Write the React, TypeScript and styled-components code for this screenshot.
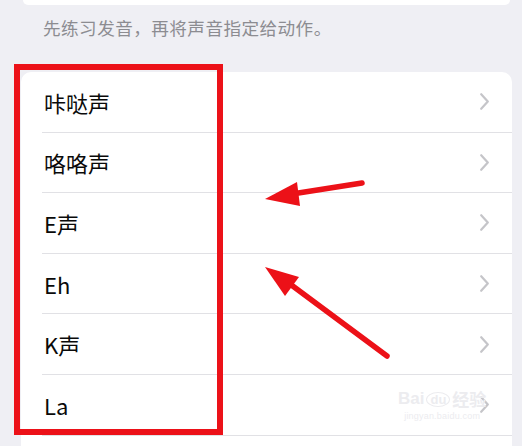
import React from "react";
import styled, { createGlobalStyle } from "styled-components";

const GlobalStyle = createGlobalStyle`
  html, body {
    margin: 0;
    padding: 0;
    background: #efeff4;
  }
  body {
    font-family: "Noto Sans CJK SC", "Noto Sans", "Liberation Sans", sans-serif;
  }
`;

const Page = styled.div`
  position: relative;
  width: 522px;
  height: 446px;
  overflow: hidden;
  background: #efeff4;
`;

const TopCard = styled.div`
  margin: 0 12px 0 23px;
  height: 5px;
  background: #ffffff;
  border-radius: 0 0 10px 10px;
`;

const Caption = styled.div`
  padding: 11px 0 0 43px;
  margin-bottom: 32px;
  font-size: 17.6px;
  line-height: 24px;
  letter-spacing: 0.45px;
  color: #8c8c91;
`;

const ListCard = styled.div`
  margin-left: 21px;
  width: 491px;
  background: #ffffff;
  border-radius: 10px 10px 0 0;
  padding-bottom: 40px;
`;

const Row = styled.div`
  padding-left: 21px;
`;

const RowInner = styled.div`
  box-sizing: border-box;
  height: 60.6px;
  display: flex;
  align-items: center;
  justify-content: space-between;
  padding: 0 23px 0 2px;
  border-bottom: 1px solid #e1e1e5;
`;

const Label = styled.span`
  font-size: 22px;
  color: #0a0a0a;
  line-height: 1;
`;

const Chevron = styled.svg`
  width: 9px;
  height: 17px;
  flex: none;
`;

const Annotation = styled.svg`
  position: absolute;
  left: 0;
  top: 0;
  width: 522px;
  height: 446px;
  pointer-events: none;
`;

const Watermark = styled.div`
  position: absolute;
  left: 398px;
  top: 390px;
  display: flex;
  flex-direction: column;
  align-items: center;
  color: #ececef;
  pointer-events: none;
  font-family: "Liberation Sans", sans-serif;
`;

const WmTop = styled.div`
  display: flex;
  align-items: flex-end;
  gap: 2px;
  font-size: 17px;
  font-weight: bold;
  line-height: 1;
`;

const WmDu = styled.span`
  border: 1.5px solid #ececef;
  border-radius: 50%;
  padding: 0 3px;
  font-size: 13px;
`;

const WmCn = styled.span`
  font-family: "Noto Sans CJK SC", sans-serif;
`;

const WmSub = styled.div`
  font-size: 9px;
  margin-top: 4px;
  letter-spacing: 0.2px;
`;

const items = ["咔哒声", "咯咯声", "E声", "Eh", "K声", "La"];

const RED = "#ec1118";

export default function App() {
  return (
    <>
      <GlobalStyle />
      <Page>
        <TopCard />
        <Caption>先练习发音，再将声音指定给动作。</Caption>
        <ListCard>
          {items.map((t) => (
            <Row key={t}>
              <RowInner>
                <Label>{t}</Label>
                <Chevron viewBox="0 0 9 17">
                  <polyline
                    points="1.2,1.2 7.8,8.5 1.2,15.8"
                    fill="none"
                    stroke="#c5c5c9"
                    strokeWidth="2.2"
                    strokeLinecap="round"
                    strokeLinejoin="round"
                  />
                </Chevron>
              </RowInner>
            </Row>
          ))}
        </ListCard>
        <Watermark>
          <WmTop>
            <span>Bai</span>
            <WmDu>du</WmDu>
            <WmCn>经验</WmCn>
          </WmTop>
          <WmSub>jingyan.baidu.com</WmSub>
        </Watermark>
        <Annotation viewBox="0 0 522 446">
          <rect x="17" y="67" width="203" height="365" fill="none" stroke={RED} strokeWidth="6" />
          <line x1="362" y1="183" x2="292" y2="194" stroke={RED} strokeWidth="5.5" strokeLinecap="round" />
          <polygon points="265,199 297,182 300,206" fill={RED} />
          <line x1="387" y1="356" x2="290" y2="284" stroke={RED} strokeWidth="5.5" strokeLinecap="round" />
          <polygon points="265,267 299,277 285,296" fill={RED} />
        </Annotation>
      </Page>
    </>
  );
}
